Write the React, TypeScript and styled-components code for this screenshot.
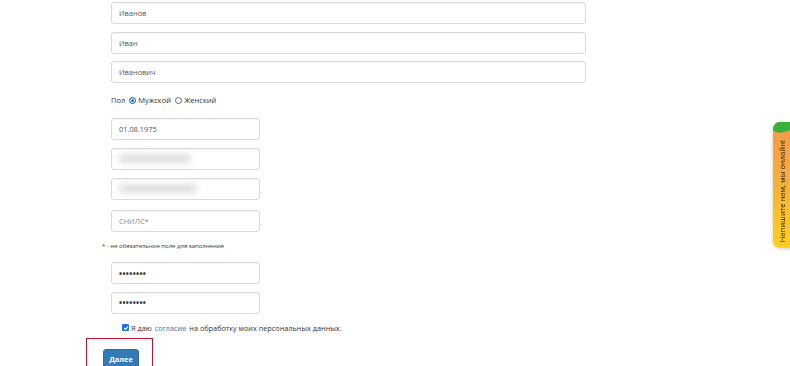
import styled, { createGlobalStyle } from "styled-components";

const GlobalStyle = createGlobalStyle`
  html, body {
    margin: 0;
    padding: 0;
    background: #ffffff;
  }
  body {
    font-family: "Open Sans", "DejaVu Sans", sans-serif;
    color: #333333;
  }
`;

const Page = styled.div`
  position: relative;
  width: 790px;
  height: 366px;
  overflow: hidden;
  background: #ffffff;
`;

const Form = styled.form`
  display: flex;
  flex-direction: column;
  align-items: flex-start;
  padding: 2px 0 0 102px;
`;

const Input = styled.div<{ $wide?: boolean; $top?: number }>`
  box-sizing: border-box;
  display: flex;
  align-items: center;
  width: ${(p) => (p.$wide ? 475 : 149)}px;
  height: 22px;
  margin: ${(p) => p.$top ?? 0}px 0 0 9px;
  padding: 0 7px;
  border: 1px solid #d9d9d9;
  border-radius: 3px;
  box-shadow: inset 0 1px 1px rgba(0, 0, 0, 0.04);
  font-size: 7.4px;
  color: #555555;
`;

const Placeholder = styled.span`
  color: #8a8a8a;
`;

const Blurred = styled.span<{ $w: number }>`
  display: inline-block;
  width: ${(p) => p.$w}px;
  height: 7px;
  background: #c4c4c4;
  border-radius: 4px;
  filter: blur(3.5px);
  opacity: 0.7;
`;

const Dots = styled.span`
  font-size: 8px;
  letter-spacing: 0.4px;
  color: #333333;
  font-weight: 700;
`;

const GenderRow = styled.div`
  display: flex;
  align-items: center;
  height: 20px;
  margin: 7px 0 0 9px;
  font-size: 7.5px;
  color: #333333;
`;

const Radio = styled.span<{ $checked?: boolean }>`
  box-sizing: border-box;
  display: inline-block;
  width: 7px;
  height: 7px;
  border-radius: 50%;
  margin: 0 2px 0 4px;
  border: 1px solid ${(p) => (p.$checked ? "#1a73e8" : "#666666")};
  background: ${(p) => (p.$checked ? "#1a73e8" : "#ffffff")};
  box-shadow: ${(p) => (p.$checked ? "inset 0 0 0 1px #ffffff" : "none")};
`;

const Note = styled.div`
  margin-top: 9px;
  height: 10px;
  line-height: 10px;
  font-size: 6px;
  color: #333333;
`;

const ConsentRow = styled.label`
  display: flex;
  align-items: center;
  height: 12px;
  margin: 8px 0 0 20px;
  font-size: 7.3px;
  color: #333333;
`;

const CheckBox = styled.span`
  box-sizing: border-box;
  display: inline-flex;
  align-items: center;
  justify-content: center;
  width: 7px;
  height: 7px;
  margin-right: 2px;
  border-radius: 1px;
  background: #1a73e8;
`;

const Link = styled.a`
  color: #2f73b6;
  text-decoration: none;
  margin: 0 3px;
`;

const ButtonFrame = styled.div`
  box-sizing: border-box;
  margin: 4px 0 0 -16px;
  width: 67px;
  height: 40px;
  border: 1px solid #c8102e;
  padding: 6px 0 0 16px;
`;

const Button = styled.button`
  box-sizing: border-box;
  width: 36px;
  height: 21px;
  border: 1px solid #2e6da4;
  border-radius: 3px;
  background: #337ab7;
  color: #ffffff;
  font-family: "Open Sans", "DejaVu Sans", sans-serif;
  font-size: 7.4px;
  font-weight: 700;
  padding: 0;
  line-height: 19px;
`;

const ChatTab = styled.div`
  position: absolute;
  top: 122px;
  right: -4px;
  width: 21px;
  height: 126px;
  box-sizing: border-box;
  padding-bottom: 6px;
  border-radius: 7px 0 0 7px;
  background: linear-gradient(to bottom, #f49a4a 0%, #f6ad3c 45%, #fbc628 80%, #ffcd22 100%);
  box-shadow: 0 1px 4px rgba(0, 0, 0, 0.2);
  overflow: hidden;
  display: flex;
  align-items: flex-end;
  justify-content: flex-start;
`;

const Leaf = styled.span`
  position: absolute;
  top: -6px;
  left: -2px;
  width: 26px;
  height: 16px;
  border-radius: 50%;
  background: #38b03a;
  transform: rotate(-18deg);
`;

const ChatText = styled.span`
  writing-mode: vertical-rl;
  transform: rotate(180deg);
  margin-left: 4px;
  font-size: 7.6px;
  color: #2e2410;
  white-space: nowrap;
`;

export default function App() {
  return (
    <Page>
      <GlobalStyle />
      <Form>
        <Input $wide>Иванов</Input>
        <Input $wide $top={7.5}>Иван</Input>
        <Input $wide $top={7.5}>Иванович</Input>
        <GenderRow>
          Пол
          <Radio $checked />
          Мужской
          <Radio />
          Женский
        </GenderRow>
        <Input $top={8}>01.08.1975</Input>
        <Input $top={7.5}>
          <Blurred $w={72} />
        </Input>
        <Input $top={8}>
          <Blurred $w={78} />
        </Input>
        <Input $top={10.5}>
          <Placeholder>СНИЛС*</Placeholder>
        </Input>
        <Note>* - не обязательное поле для заполнения</Note>
        <Input $top={11}>
          <Dots>••••••••</Dots>
        </Input>
        <Input $top={7.5}>
          <Dots>••••••••</Dots>
        </Input>
        <ConsentRow>
          <CheckBox>
            <svg width="6" height="6" viewBox="0 0 10 10">
              <path d="M2 5.2 L4.2 7.4 L8.2 2.8" stroke="#ffffff" strokeWidth="1.8" fill="none" />
            </svg>
          </CheckBox>
          Я даю<Link href="#">согласие</Link>на обработку моих персональных данных.
        </ConsentRow>
        <ButtonFrame>
          <Button type="button">Далее</Button>
        </ButtonFrame>
      </Form>
      <ChatTab>
        <Leaf />
        <ChatText>Напишите нам, мы онлайн!</ChatText>
      </ChatTab>
    </Page>
  );
}
